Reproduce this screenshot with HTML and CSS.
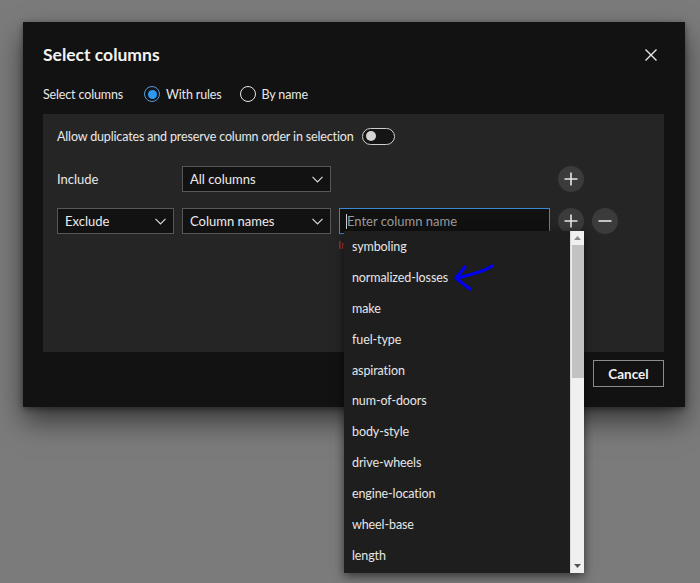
FILE: index.html
```html
<!DOCTYPE html>
<html>
<head>
<meta charset="utf-8">
<link rel="stylesheet" href="styles.css">
</head>
<body>
<div class="dialog">
  <div class="header">
    <h1 class="title">Select columns</h1>
    <svg class="close" width="14" height="14" viewBox="0 0 14 14"><path d="M1.5 1.5 L12.5 12.5 M12.5 1.5 L1.5 12.5" stroke="#e8e8e8" stroke-width="1.4" fill="none"/></svg>
  </div>
  <div class="mode-row">
    <span class="mode-label">Select columns</span>
    <span class="radio radio-on"><span class="dot"></span></span>
    <span class="radio-text">With rules</span>
    <span class="radio"></span>
    <span class="radio-text">By name</span>
  </div>
  <div class="panel">
    <div class="toggle-row">
      <span>Allow duplicates and preserve column order in selection</span>
      <span class="toggle"><span class="knob"></span></span>
    </div>
    <div class="rules">
      <div class="rule-label">Include</div>
      <div class="select c2"><span>All columns</span><svg class="chev" width="11" height="7" viewBox="0 0 11 7"><path d="M0.5 0.8 L5.5 5.8 L10.5 0.8" stroke="#d8d8d8" stroke-width="1.2" fill="none"/></svg></div>
      <div class="c3"></div>
      <div class="circle-btn c4"><svg width="14" height="14" viewBox="0 0 14 14"><path d="M7 0.5 V13.5 M0.5 7 H13.5" stroke="#e6e6e6" stroke-width="1.6"/></svg></div>
      <div class="c5"></div>

      <div class="select c1"><span>Exclude</span><svg class="chev" width="11" height="7" viewBox="0 0 11 7"><path d="M0.5 0.8 L5.5 5.8 L10.5 0.8" stroke="#d8d8d8" stroke-width="1.2" fill="none"/></svg></div>
      <div class="select c2"><span>Column names</span><svg class="chev" width="11" height="7" viewBox="0 0 11 7"><path d="M0.5 0.8 L5.5 5.8 L10.5 0.8" stroke="#d8d8d8" stroke-width="1.2" fill="none"/></svg></div>
      <div class="input-wrap c3">
        <div class="input"><span class="caret"></span><span class="placeholder">Enter column name</span></div>
        <span class="error">In</span>
        <div class="listbox">
          <ul class="options">
            <li>symboling</li>
            <li>normalized-losses</li>
            <li>make</li>
            <li>fuel-type</li>
            <li>aspiration</li>
            <li>num-of-doors</li>
            <li>body-style</li>
            <li>drive-wheels</li>
            <li>engine-location</li>
            <li>wheel-base</li>
            <li>length</li>
          </ul>
          <div class="scrollbar">
            <svg class="arrow-up" width="7" height="4" viewBox="0 0 7 4"><path d="M0 4 L3.5 0 L7 4 Z" fill="#8a8a8a"/></svg>
            <div class="thumb"></div>
            <svg class="arrow-down" width="7" height="4" viewBox="0 0 7 4"><path d="M0 0 L3.5 4 L7 0 Z" fill="#555"/></svg>
          </div>
        </div>
      </div>
      <div class="circle-btn c4"><svg width="14" height="14" viewBox="0 0 14 14"><path d="M7 0.5 V13.5 M0.5 7 H13.5" stroke="#e6e6e6" stroke-width="1.6"/></svg></div>
      <div class="circle-btn c5"><svg width="14" height="14" viewBox="0 0 14 14"><path d="M0.5 7 H13.5" stroke="#e6e6e6" stroke-width="1.6"/></svg></div>
    </div>
  </div>
  <div class="footer">
    <button class="cancel">Cancel</button>
  </div>
</div>
<svg class="annot" width="60" height="40" viewBox="0 0 60 40"><path d="M46 5 C40 9 30 13 10 17 M19 6 C16 10 13 13 10 17 C14 20 18 24 24 28" stroke="#0000f5" stroke-width="3.2" fill="none" stroke-linecap="round" stroke-linejoin="round"/></svg>
</body>
</html>
```

FILE: styles.css
```css
html, body {
  margin: 0;
  padding: 0;
}
body {
  background: #7b7b7b;
  width: 700px;
  height: 583px;
  overflow: hidden;
  font-family: "Lato", "Noto Sans", sans-serif;
  color: #e8e8e8;
  position: relative;
}
.dialog {
  margin: 22px 0 0 23px;
  width: 662px;
  height: 385px;
  box-sizing: border-box;
  background: #121212;
  padding: 0 21px 0 20px;
  box-shadow: 0 14px 26px rgba(0,0,0,0.55), 0 2px 6px rgba(0,0,0,0.4);
  display: flex;
  flex-direction: column;
}
.header {
  display: flex;
  align-items: center;
  justify-content: space-between;
  padding-top: 22px;
  height: 22px;
}
.title {
  margin: 0;
  font-size: 17.5px;
  font-weight: 700;
  line-height: 22px;
  color: #f2f2f2;
}
.close {
  margin-right: 6px;
}
.mode-row {
  display: flex;
  align-items: center;
  height: 20px;
  margin-top: 18px;
  font-size: 12.5px;
  letter-spacing: -0.15px;
}
.mode-label {
  width: 101px;
}
.radio {
  width: 16px;
  height: 16px;
  box-sizing: border-box;
  border: 1.5px solid #e6e6e6;
  border-radius: 50%;
  display: flex;
  align-items: center;
  justify-content: center;
}
.radio-on {
  border-color: #5a9ad8;
}
.radio-on .dot {
  width: 9px;
  height: 9px;
  border-radius: 50%;
  background: #3097ef;
}
.radio-text {
  margin-left: 6px;
  margin-right: 18px;
}
.panel {
  margin-top: 10px;
  height: 238px;
  background: #252525;
  padding: 13px 0 0 14px;
  box-sizing: border-box;
}
.toggle-row {
  display: flex;
  align-items: center;
  height: 18px;
  font-size: 12.5px;
  letter-spacing: -0.15px;
}
.toggle {
  margin-left: 8px;
  width: 33px;
  height: 17px;
  box-sizing: border-box;
  border: 1.5px solid #cfcfcf;
  border-radius: 9px;
  background: #151515;
  display: flex;
  align-items: center;
  padding-left: 3px;
}
.knob {
  width: 10px;
  height: 10px;
  border-radius: 50%;
  background: #d4d4d4;
}
.rules {
  margin-top: 21px;
  display: grid;
  grid-template-columns: 117px 149px 211px 26px 26px;
  grid-auto-rows: 26px;
  column-gap: 8px;
  row-gap: 16px;
  font-size: 13px;
}
.rule-label {
  display: flex;
  align-items: center;
}
.select {
  background: #121212;
  border: 1px solid #575757;
  box-sizing: border-box;
  display: flex;
  align-items: center;
  justify-content: space-between;
  padding: 0 7px 0 7px;
  color: #ececec;
}
.circle-btn {
  width: 26px;
  height: 26px;
  border-radius: 50%;
  background: #3b3b3b;
  display: flex;
  align-items: center;
  justify-content: center;
}
.input-wrap {
  position: relative;
}
.input {
  height: 26px;
  box-sizing: border-box;
  border: 1px solid #3d87d0;
  background: #111;
  display: flex;
  align-items: center;
  padding-left: 6px;
}
.caret {
  width: 1px;
  height: 15px;
  background: #cfcfcf;
}
.placeholder {
  color: #9b9b9b;
}
.error {
  position: absolute;
  left: -1px;
  top: 30px;
  font-size: 11px;
  color: #c0392b;
}
.listbox {
  position: absolute;
  left: 5px;
  top: 23px;
  width: 240px;
  height: 342px;
  background: #1e1e1e;
  box-shadow: 0 3px 10px rgba(0,0,0,0.6);
  display: flex;
  z-index: 2;
}
.options {
  list-style: none;
  margin: 0;
  padding: 0;
  flex: 1;
}
.options li {
  height: 30.9px;
  line-height: 31px;
  padding-left: 8px;
  font-size: 12.5px;
  letter-spacing: -0.1px;
  color: #e6e6e6;
}
.scrollbar {
  width: 14px;
  background: #f0f0f0;
  border-left: 1px solid #dcdcdc;
  box-sizing: border-box;
  display: flex;
  flex-direction: column;
  align-items: center;
  padding: 0 1px;
}
.arrow-up {
  margin-top: 5px;
  margin-bottom: 5px;
}
.thumb {
  width: 12px;
  height: 133px;
  background: #c2c2c2;
}
.arrow-down {
  margin-top: auto;
  margin-bottom: 5px;
}
.footer {
  display: flex;
  justify-content: flex-end;
  margin-top: 8px;
}
.cancel {
  width: 71px;
  height: 27px;
  background: #121212;
  border: 1.5px solid #8c8c8c;
  color: #f2f2f2;
  font-family: "Lato", "Noto Sans", sans-serif;
  font-weight: 700;
  font-size: 13.5px;
  padding: 0;
}
.annot {
  position: absolute;
  left: 446px;
  top: 261px;
  z-index: 5;
}
```
